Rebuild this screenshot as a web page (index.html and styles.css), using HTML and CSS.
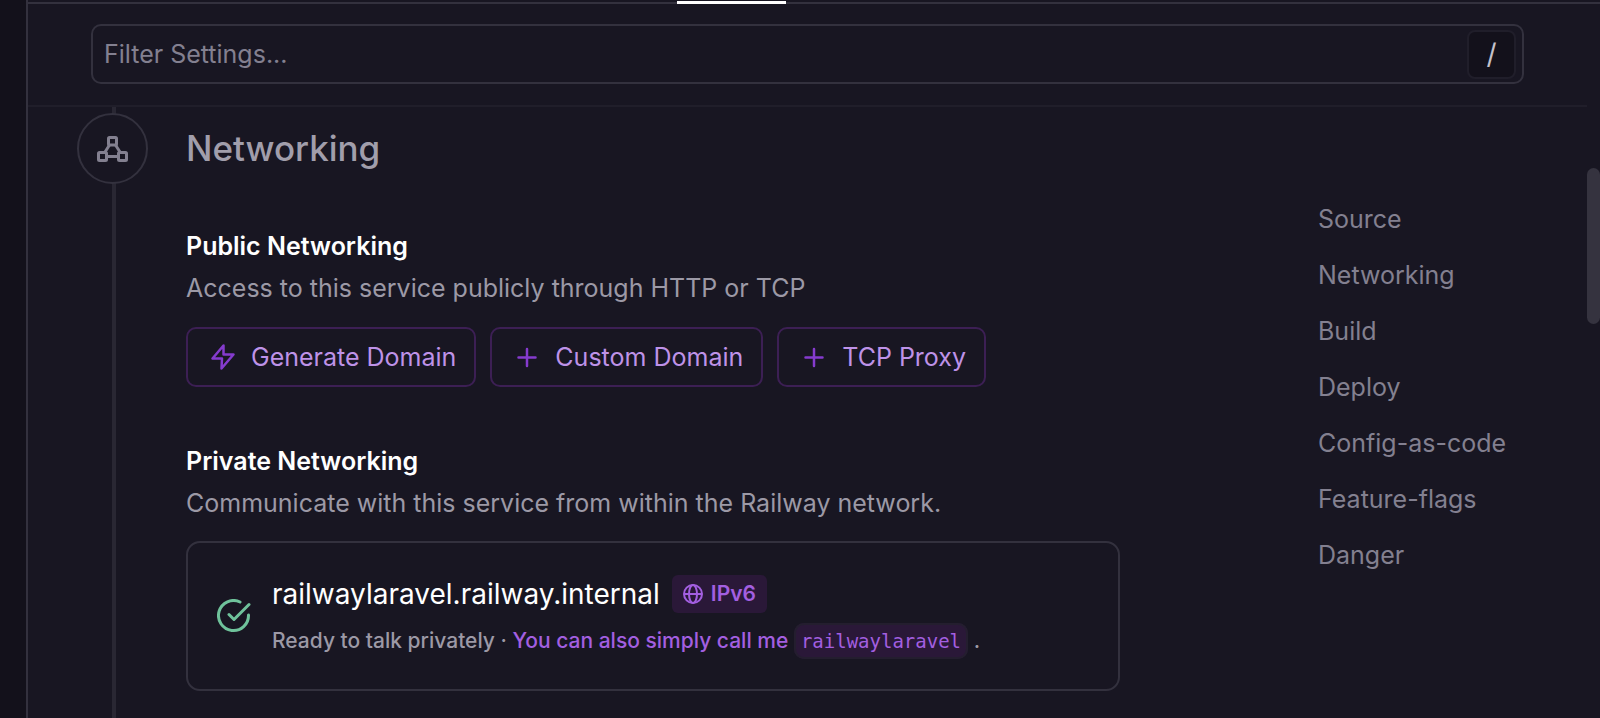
FILE: index.html
```html
<!DOCTYPE html>
<html lang="en">
<head>
  <meta charset="UTF-8">
  <title>Service Settings</title>
  <link rel="stylesheet" href="styles.css">
</head>
<body>
  <div class="panel">
    <div class="tabs"><div class="tab-active"></div></div>

    <div class="filter">
      <label class="filter-box">
        <input type="text" placeholder="Filter Settings..." aria-label="Filter Settings">
        <kbd>/</kbd>
      </label>
    </div>

    <div class="content">
      <div class="timeline">
        <div class="step">
          <svg width="31" height="26" viewBox="0 0 31 26" fill="none" stroke="currentColor" stroke-width="3" stroke-linejoin="round">
            <rect x="11.5" y="1.5" width="8" height="7.5" rx="1"/>
            <rect x="1.5" y="16.5" width="8" height="8" rx="1"/>
            <rect x="21.5" y="16.5" width="8" height="8" rx="1"/>
            <path d="M12.5 9L8 16M18.5 9L23 16M10 20.5h11"/>
          </svg>
        </div>
      </div>

      <main>
        <h1>Networking</h1>

        <section>
          <h2>Public Networking</h2>
          <p>Access to this service publicly through HTTP or TCP</p>
          <div class="buttons">
            <button>
              <svg width="26" height="28" viewBox="0 0 26 28" fill="none" stroke="currentColor" stroke-width="2.5" stroke-linejoin="round"><path d="M13.5 2.5L2.500 15.500h9.500l-.5 10L23.500 11.500h-10z"/></svg>
              Generate Domain
            </button>
            <button>
              <svg width="26" height="28" viewBox="0 0 26 28" fill="none" stroke="currentColor" stroke-width="2.5" stroke-linecap="round"><path d="M13 6v17M4.5 14.5h17"/></svg>
              Custom Domain
            </button>
            <button>
              <svg width="26" height="28" viewBox="0 0 26 28" fill="none" stroke="currentColor" stroke-width="2.5" stroke-linecap="round"><path d="M13 6v17M4.5 14.5h17"/></svg>
              TCP Proxy
            </button>
          </div>
        </section>

        <section>
          <h2>Private Networking</h2>
          <p>Communicate with this service from within the Railway network.</p>
          <div class="card">
            <svg class="check" width="34" height="34" viewBox="0 0 34 34" fill="none" stroke="currentColor" stroke-width="3" stroke-linecap="round" stroke-linejoin="round">
              <path d="M23 3A15 15 0 1 0 31.5 16"/>
              <path d="M12 15.5l5 5L32 5.5"/>
            </svg>
            <div class="card-text">
              <div class="host">
                <span>railwaylaravel.railway.internal</span>
                <span class="badge">
                  <svg width="20" height="20" viewBox="0 0 20 20" fill="none" stroke="currentColor" stroke-width="2"><circle cx="10" cy="10" r="9"/><ellipse cx="10" cy="10" rx="4" ry="9"/><path d="M1 10h18"/></svg>
                  IPv6
                </span>
              </div>
              <div class="status">Ready to talk privately · <span class="hint">You can also simply call me</span> <code>railwaylaravel</code> .</div>
            </div>
          </div>
        </section>
      </main>

      <nav>
        <a href="#">Source</a>
        <a href="#">Networking</a>
        <a href="#">Build</a>
        <a href="#">Deploy</a>
        <a href="#">Config-as-code</a>
        <a href="#">Feature-flags</a>
        <a href="#">Danger</a>
      </nav>
    </div>

    <div class="scrollbar"></div>
  </div>
</body>
</html>
```
FILE: styles.css
```css
* {
  box-sizing: border-box;
  margin: 0;
  padding: 0;
}

body {
  font-family: Inter, sans-serif;
  font-size: 25px;
  line-height: 32px;
  background: #13111b;
  color: #9c99a6;
  padding-left: 26px;
}

.panel {
  position: relative;
  display: flex;
  flex-direction: column;
  min-height: 100vh;
  background: #181622;
  border-left: 2px solid #33313e;
}

.tabs {
  height: 4px;
  border-bottom: 2px solid #33313e;
}

.tab-active {
  width: 109px;
  height: 3px;
  margin: 1px 0 0 649px;
  background: #fff;
}

.filter {
  padding: 20px 63px 21px 63px;
  margin-right: 13px;
  border-bottom: 2px solid #201e2a;
}

.filter-box {
  display: flex;
  align-items: center;
  height: 60px;
  padding: 0 6px 0 11px;
  border: 2px solid #33313e;
  border-radius: 10px;
}

.filter-box input {
  flex: 1;
  font: inherit;
  color: #fff;
  background: none;
  border: none;
  outline: none;
}

.filter-box input::placeholder {
  color: #838090;
}

.filter-box kbd {
  width: 49px;
  height: 49px;
  font-family: inherit;
  font-size: 28px;
  line-height: 45px;
  text-align: center;
  color: #c4c1ca;
  background: #13111b;
  border: 2px solid #201e2a;
  border-radius: 8px;
}

.content {
  flex: 1;
  display: flex;
  padding-left: 49px;
}

.timeline {
  width: 71px;
  padding-top: 6px;
  background: linear-gradient(#292733, #292733) 35px 0 / 4px 100% no-repeat;
}

.step {
  display: flex;
  align-items: center;
  justify-content: center;
  height: 71px;
  color: #838090;
  background: #181622;
  border: 2px solid #33313e;
  border-radius: 50%;
}

main {
  flex: 1;
  max-width: 972px;
  padding: 20px 0 26px 38px;
}

h1 {
  font-size: 35px;
  font-weight: 500;
  line-height: 43px;
  color: #a19eab;
}

h2 {
  font-size: 25px;
  font-weight: 600;
  line-height: 32px;
  color: #fff;
  margin-bottom: 10px;
}

section {
  margin-top: 60px;
}

section + section {
  margin-top: 58px;
}

.buttons {
  display: flex;
  gap: 14px;
  margin-top: 23px;
}

button {
  display: flex;
  align-items: center;
  gap: 15px;
  height: 60px;
  padding: 0 18px 0 22px;
  font: inherit;
  color: #be92e8;
  background: none;
  border: 2px solid #3c1f54;
  border-radius: 10px;
}

button svg {
  color: #853bce;
}

.card {
  display: flex;
  align-items: center;
  gap: 21px;
  height: 150px;
  margin-top: 22px;
  padding: 0 29px;
  border: 2px solid #33313e;
  border-radius: 14px;
}

.check {
  color: #6fc29b;
}

.host {
  display: flex;
  align-items: center;
  gap: 12px;
  font-size: 28px;
  color: #fff;
}

.badge {
  display: flex;
  align-items: center;
  gap: 8px;
  height: 38px;
  padding: 0 11px;
  font-size: 21px;
  font-weight: 600;
  color: #a35fe0;
  background: #2a1838;
  border-radius: 6px;
}

.status {
  margin-top: 12px;
  font-size: 21px;
  font-weight: 500;
}

.hint {
  color: #a35fe0;
}

.status code {
  padding: 5px;
  font-family: "DejaVu Sans Mono", monospace;
  font-size: 19px;
  font-weight: 400;
  color: #a35fe0;
  background: #2a1838;
  border: 2px solid #241e2f;
  border-radius: 10px;
}

nav {
  display: flex;
  flex-direction: column;
  gap: 24px;
  width: 206px;
  margin: 96px 76px 0 auto;
}

nav a {
  color: #838090;
  text-decoration: none;
}

.scrollbar {
  position: absolute;
  top: 168px;
  right: 0;
  width: 13px;
  height: 156px;
  background: #35333f;
  border-radius: 7px;
}
```
